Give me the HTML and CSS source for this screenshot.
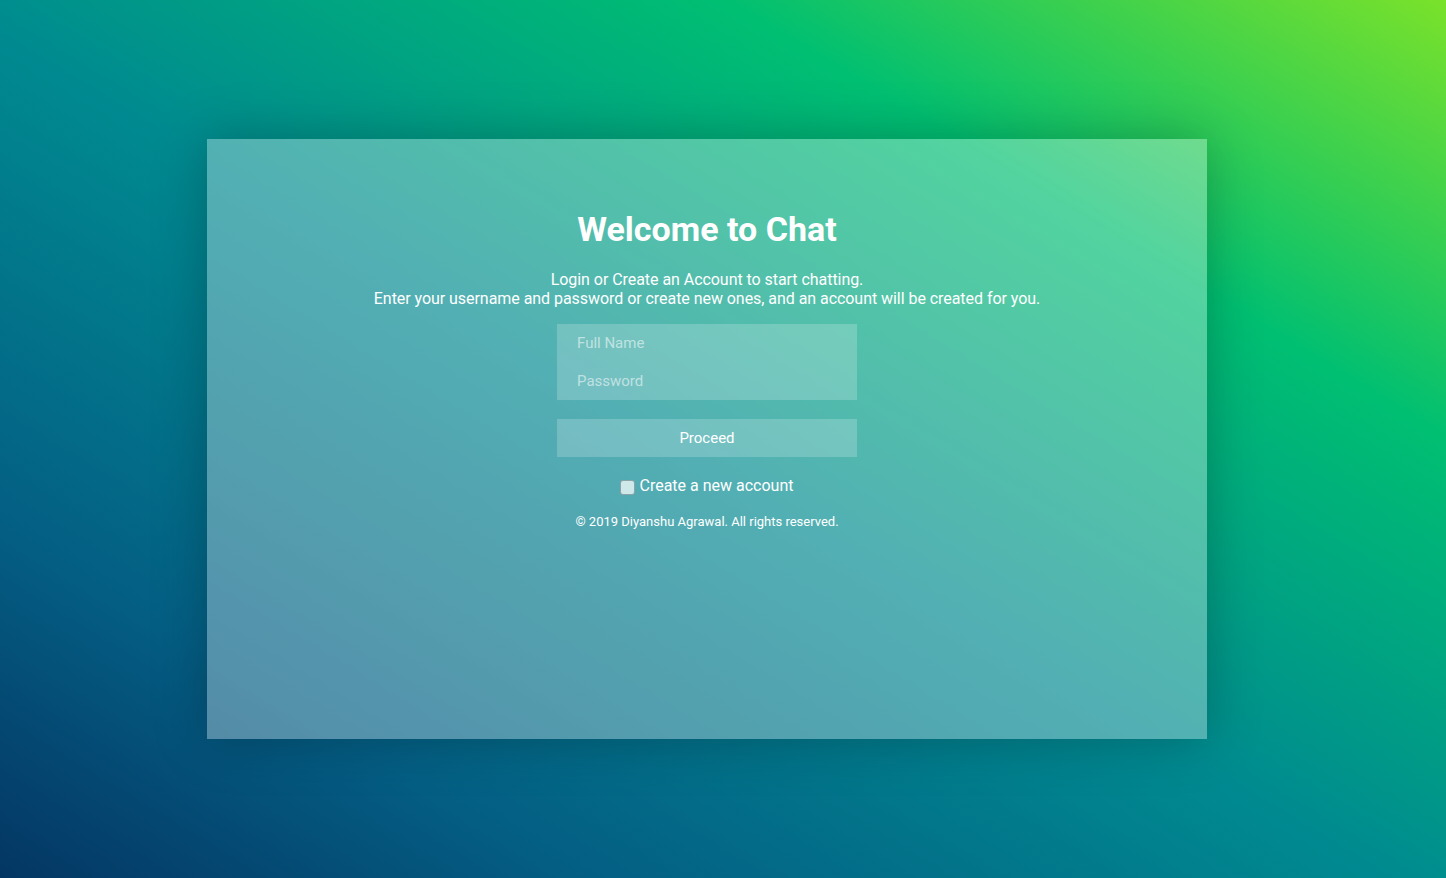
FILE: index.html
```html
<!DOCTYPE html>
<html lang="en">
<head>
<meta charset="utf-8">
<title>Welcome to Chat</title>
<link rel="stylesheet" href="styles.css">
</head>
<body>
<div class="page">
  <main class="card">
    <h1 class="title">Welcome to Chat</h1>
    <p class="lead">Login or Create an Account to start chatting.<br>Enter your username and password or create new ones, and an account will be created for you.</p>
    <form class="form">
      <div class="fields">
        <input class="field" type="text" placeholder="Full Name">
        <input class="field" type="password" placeholder="Password">
      </div>
      <button class="btn" type="button">Proceed</button>
      <label class="check"><input type="checkbox" class="box"><span>Create a new account</span></label>
    </form>
    <p class="foot">© 2019 Diyanshu Agrawal. All rights reserved.</p>
  </main>
</div>
</body>
</html>
```

FILE: styles.css
```css
html, body {
  margin: 0;
  padding: 0;
  height: 100%;
}
body {
  font-family: Roboto, "Noto Sans", sans-serif;
  color: #fff;
  background-image: linear-gradient(to right top, #043663 0%, #045e84 20%, #008a90 48%, #00bf72 75%, #7ae22a 100%);
  overflow: hidden;
}
.page {
  height: 100%;
  display: flex;
  align-items: center;
  justify-content: center;
  padding-right: 32px;
  box-sizing: border-box;
}
.card {
  width: 1000px;
  height: 600px;
  box-sizing: border-box;
  background: rgba(255, 255, 255, 0.32);
  box-shadow: 0 0 50px rgba(0, 0, 0, 0.25);
  display: flex;
  flex-direction: column;
  align-items: center;
  padding-top: 71px;
}
.title {
  margin: 0;
  font-size: 34px;
  font-weight: 700;
  line-height: 38px;
}
.lead {
  margin: 22px 0 0;
  font-size: 16px;
  line-height: 19px;
  letter-spacing: -0.05px;
  text-align: center;
}
.form {
  margin-top: 16px;
  display: flex;
  flex-direction: column;
  align-items: center;
}
.fields {
  width: 300px;
  background: rgba(255, 255, 255, 0.2);
  display: flex;
  flex-direction: column;
}
.field {
  height: 38px;
  border: 0;
  outline: 0;
  background: transparent;
  padding: 0 20px;
  font-family: Roboto, sans-serif;
  font-size: 15px;
  color: #fff;
  box-sizing: border-box;
}
.field::placeholder {
  color: rgba(255, 255, 255, 0.55);
}
.btn {
  margin-top: 19px;
  width: 300px;
  height: 38px;
  border: 0;
  background: rgba(255, 255, 255, 0.2);
  color: #fff;
  font-family: Roboto, sans-serif;
  font-size: 15px;
}
.check {
  margin-top: 19px;
  display: flex;
  align-items: center;
  font-size: 16px;
  line-height: 19px;
}
.box {
  -webkit-appearance: none;
  appearance: none;
  box-sizing: border-box;
  margin: 3px 4px 0 0;
  width: 15px;
  height: 15px;
  border: 1px solid rgba(110, 135, 140, 0.7);
  border-radius: 3px;
  background: rgba(255, 255, 255, 0.72);
}
.foot {
  margin: 19px 0 0;
  font-size: 13px;
  line-height: 15px;
}
```
